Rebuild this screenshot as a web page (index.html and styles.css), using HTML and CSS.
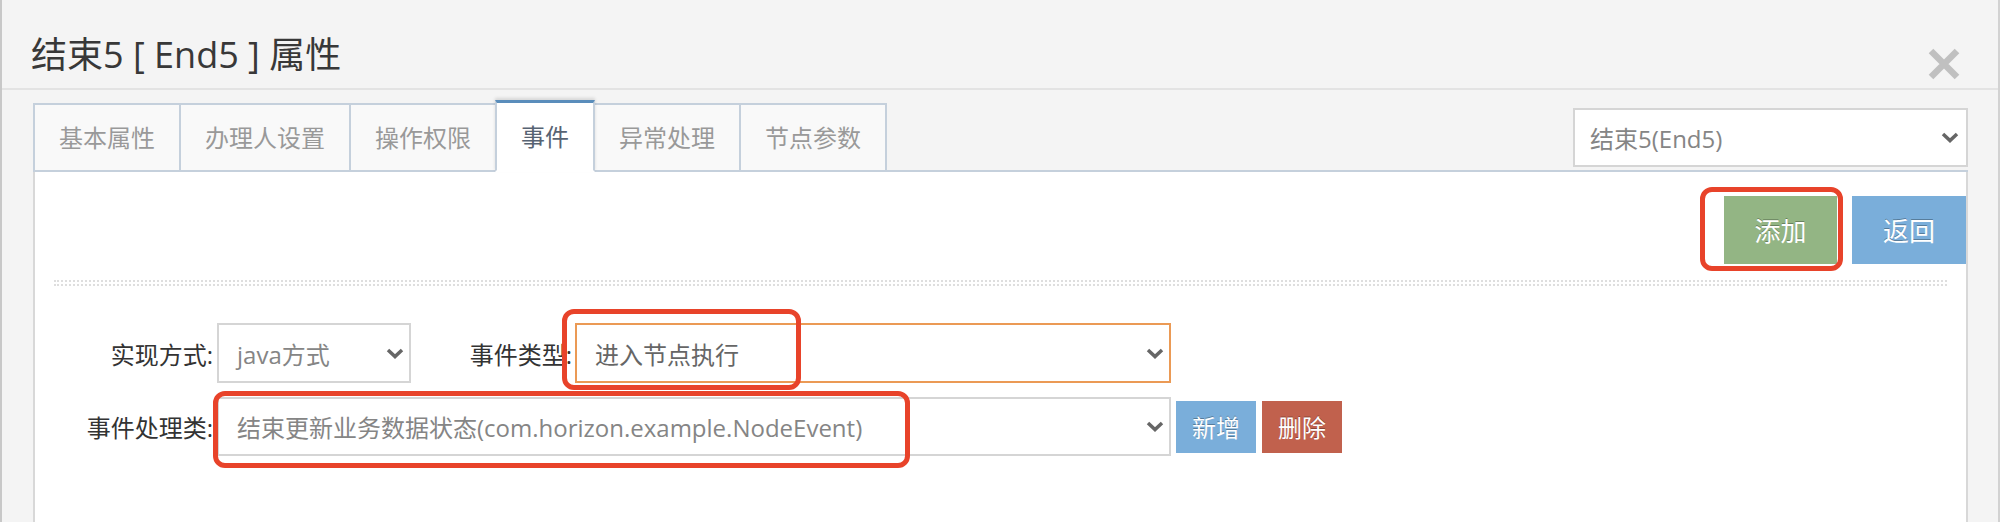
FILE: index.html
```html
<!DOCTYPE html>
<html lang="zh-CN">
<head>
    <meta charset="UTF-8">
    <meta name="viewport" content="width=device-width, initial-scale=1.0">
    <title>结束5 [ End5 ] 属性</title>
    <link rel="stylesheet" href="styles.css">
</head>
<body>
    <!-- 节点属性弹窗 -->
    <div class="modal">
        <div class="modal-header">
            <h3 class="modal-title">结束5 [ End5 ] 属性</h3>
            <button class="close" type="button">
                <svg width="32" height="32" viewBox="0 0 32 32">
                    <path d="M3 3 L29 29 M29 3 L3 29" stroke="#c0c0c0" stroke-width="6.5" fill="none"/>
                </svg>
            </button>
        </div>

        <div class="modal-body">
            <!-- 标签页 + 节点下拉 -->
            <div class="tabbar">
                <ul class="nav-tabs">
                    <li><a>基本属性</a></li>
                    <li><a>办理人设置</a></li>
                    <li><a>操作权限</a></li>
                    <li class="active"><a>事件</a></li>
                    <li><a>异常处理</a></li>
                    <li><a>节点参数</a></li>
                </ul>
                <div class="select node-select">
                    <span>结束5(End5)</span>
                    <svg class="caret" width="18" height="11" viewBox="0 0 18 11"><polyline points="2,2 9,8.5 16,2" fill="none" stroke="#666" stroke-width="3.5"/></svg>
                </div>
            </div>

            <!-- 事件 标签内容 -->
            <div class="tab-content">
                <div class="toolbar">
                    <span class="mark-wrap">
                        <button class="btn btn-success" type="button">添加</button>
                        <i class="mark mark-add"></i>
                    </span>
                    <button class="btn btn-info" type="button">返回</button>
                </div>

                <div class="hr-dotted"></div>

                <div class="form-row row-first">
                    <label class="lbl">实现方式:</label>
                    <div class="select sel-impl">
                        <span>java方式</span>
                        <svg class="caret" width="18" height="11" viewBox="0 0 18 11"><polyline points="2,2 9,8.5 16,2" fill="none" stroke="#666" stroke-width="3.5"/></svg>
                    </div>
                    <label class="lbl lbl-type">事件类型:</label>
                    <div class="select sel-type">
                        <span class="dark">进入节点执行</span>
                        <svg class="caret" width="18" height="11" viewBox="0 0 18 11"><polyline points="2,2 9,8.5 16,2" fill="none" stroke="#666" stroke-width="3.5"/></svg>
                        <i class="mark mark-type"></i>
                    </div>
                </div>

                <div class="form-row row-second">
                    <label class="lbl">事件处理类:</label>
                    <div class="select sel-handler">
                        <span>结束更新业务数据状态(com.horizon.example.NodeEvent)</span>
                        <svg class="caret" width="18" height="11" viewBox="0 0 18 11"><polyline points="2,2 9,8.5 16,2" fill="none" stroke="#666" stroke-width="3.5"/></svg>
                        <i class="mark mark-handler"></i>
                    </div>
                    <button class="btn btn-sm btn-info" type="button">新增</button>
                    <button class="btn btn-sm btn-danger" type="button">删除</button>
                </div>
            </div>
        </div>
    </div>
</body>
</html>
```

FILE: styles.css
```css
* {
    box-sizing: border-box;
}

body {
    margin: 0;
    background: #fff;
    font-family: "Open Sans", "Noto Sans CJK SC", sans-serif;
}

.modal {
    width: 2000px;
    height: 522px;
    background: #f4f4f4;
    border-left: 2px solid #c8c8c8;
    border-right: 2px solid #d2d2d2;
    overflow: hidden;
}

/* 标题栏 */
.modal-header {
    height: 90px;
    display: flex;
    justify-content: space-between;
    align-items: flex-start;
    padding: 0 38px 0 29px;
    border-bottom: 2px solid #e3e3e3;
}

.modal-title {
    margin: 0;
    padding-top: 35px;
    font-size: 36px;
    line-height: 40px;
    font-weight: normal;
    color: #383838;
}

.close {
    margin-top: 48px;
    width: 32px;
    height: 32px;
    padding: 0;
    border: 0;
    background: none;
}

.modal-body {
    padding: 10px 30px 0 31px;
}

/* 标签页 */
.tabbar {
    display: flex;
    align-items: flex-start;
    height: 72px;
    border-bottom: 2px solid #c5d0dc;
}

.nav-tabs {
    display: flex;
    align-items: flex-end;
    list-style: none;
    margin: 0 0 -2px 0;
    padding: 0;
    height: 72px;
}

.nav-tabs li + li {
    margin-left: -2px;
}

.nav-tabs a {
    display: flex;
    align-items: center;
    height: 69px;
    padding: 0 24px;
    font-size: 24px;
    line-height: 30px;
    color: #999;
    background: #f9f9f9;
    border: 2px solid #c5d0dc;
}

.nav-tabs .active {
    position: relative;
    z-index: 1;
}

.nav-tabs .active a {
    height: 72px;
    color: #576373;
    background: #fff;
    border-top: 3px solid #5a8dbb;
    border-bottom-color: #fff;
    box-shadow: 0 -2px 3px rgba(0, 0, 0, 0.12);
}

/* 下拉框 */
.select {
    position: relative;
    display: flex;
    align-items: center;
    justify-content: space-between;
    height: 60px;
    padding: 0 5px 0 18px;
    background: #fff;
    border: 2px solid #d5d5d5;
    font-size: 24px;
    color: #858585;
    white-space: nowrap;
}

.select .dark {
    color: #666;
}

.caret {
    flex: none;
}

.node-select {
    margin-left: auto;
    margin-top: 8px;
    width: 395px;
    height: 59px;
    padding: 0 7px 0 15px;
}

/* 内容区一直延伸到弹窗底部 */
.tab-content {
    height: 380px;
    padding-top: 24px;
    background: #fff;
    border: 2px solid #d8d8d8;
    border-top: 0;
}

/* 按钮 */
.toolbar {
    display: flex;
    justify-content: flex-end;
    gap: 15px;
}

.mark-wrap {
    position: relative;
    display: flex;
}

.btn {
    height: 68px;
    padding: 0 30px;
    border: 0;
    font-family: inherit;
    font-size: 26px;
    color: #fff;
    text-shadow: 0 -1px 0 rgba(0, 0, 0, 0.3);
}

.btn-success {
    width: 113px;
    background: #93b584;
}

.btn-info {
    width: 114px;
    background: #7aaeda;
}

.btn-danger {
    background: #c1614d;
}

.btn-sm {
    width: 80px;
    height: 52px;
    padding: 0;
    font-size: 24px;
}

.hr-dotted {
    height: 6px;
    margin: 16px 19px 0;
    border-top: 2px dotted #dedede;
    border-bottom: 2px dotted #dedede;
}

/* 表单 */
.form-row {
    display: flex;
    align-items: center;
}

.row-first {
    margin-top: 37px;
}

.row-second {
    margin-top: 14px;
}

.lbl {
    width: 182px;
    padding-right: 4px;
    text-align: right;
    font-size: 24px;
    color: #333;
}

.lbl-type {
    width: 164px;
    padding-right: 3px;
}

.sel-impl {
    width: 194px;
}

.sel-type {
    width: 596px;
    border-color: #eb9a55;
}

.sel-handler {
    width: 954px;
    height: 59px;
}

.row-second .btn-info {
    margin-left: 5px;
}

.row-second .btn-danger {
    margin-left: 6px;
}

/* 红色标注框 */
.mark {
    position: absolute;
    border: 5px solid #e8432a;
    border-radius: 12px;
    pointer-events: none;
}

.mark-add {
    left: -24px;
    top: -9px;
    width: 143px;
    height: 84px;
}

.mark-type {
    left: -15px;
    top: -16px;
    width: 239px;
    height: 81px;
}

.mark-handler {
    left: -6px;
    top: -8px;
    width: 697px;
    height: 77px;
}
```
